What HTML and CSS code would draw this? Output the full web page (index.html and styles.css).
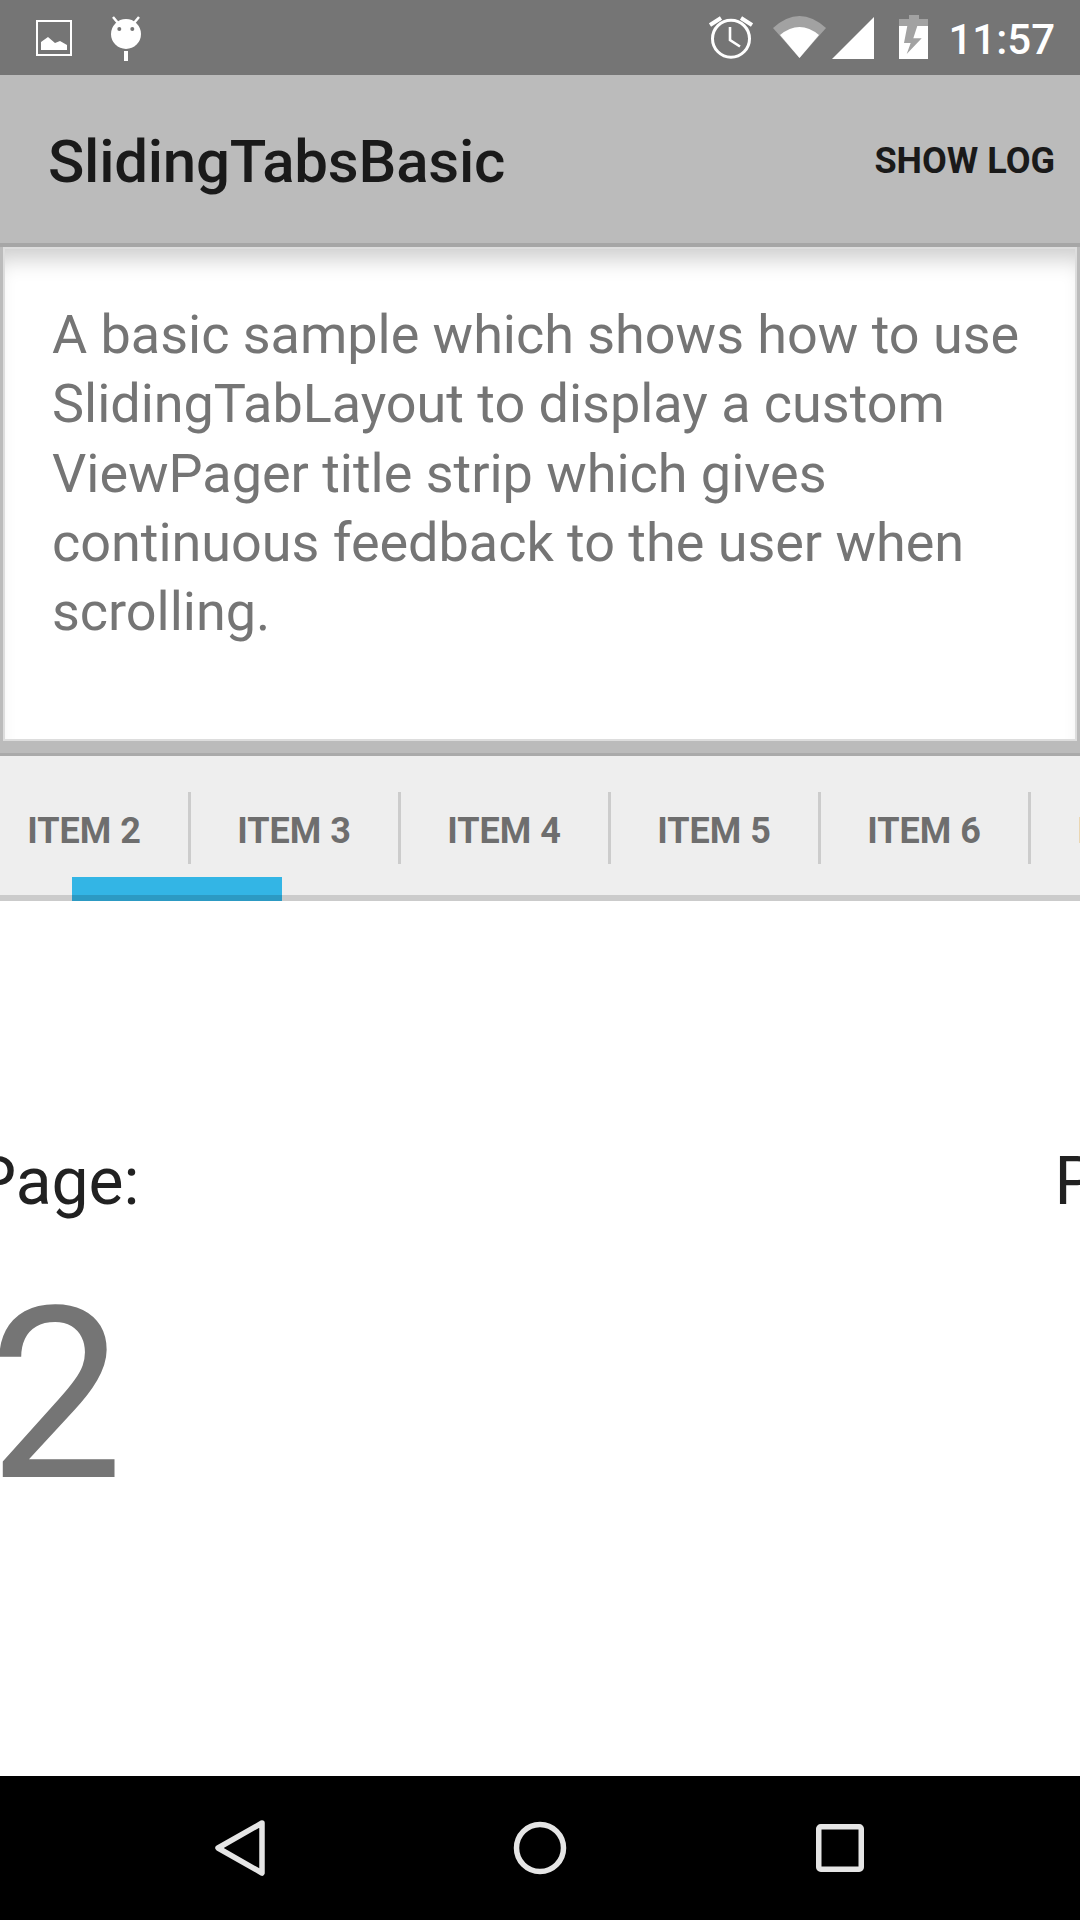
FILE: index.html
```html
<!DOCTYPE html>
<html lang="en">
<head>
<meta charset="utf-8">
<title>SlidingTabsBasic</title>
<link rel="stylesheet" href="styles.css">
</head>
<body>
<div class="screen">
  <header class="status">
    <svg class="ic-picture" viewBox="0 0 36 36" width="36" height="36"><rect x="1" y="1" width="34" height="34" fill="none" stroke="#fff" stroke-width="2"/><path d="M5 30V22L12 17L19 23L24 21L31 25V30Z" fill="#fff"/></svg>
    <svg class="ic-android" viewBox="0 0 32 46" width="32" height="46"><path d="M3 1L8 7M29 1L24 7" stroke="#fff" stroke-width="2.500"/><circle cx="16" cy="18" r="15" fill="#fff"/><circle cx="9.300" cy="13" r="2" fill="#757575"/><circle cx="22.300" cy="13" r="2" fill="#757575"/><rect x="14" y="35" width="4" height="10" fill="#fff"/></svg>
    <div class="status-right">
      <svg class="ic-alarm" viewBox="0 0 44 44" width="44" height="44"><circle cx="22" cy="22.700" r="18.500" fill="none" stroke="#fff" stroke-width="3"/><path d="M21 11V24L31 30.500" fill="none" stroke="#fff" stroke-width="2.600"/><path d="M1 9L12 2M43 9L32 2" stroke="#fff" stroke-width="4"/></svg>
      <svg class="ic-wifi" viewBox="0 0 53 42" width="53" height="42"><path d="M0 12Q26.500 -12 53 12L26.500 42Z" fill="#a2a2a2"/><path d="M7 19Q26.500 3 46 19L26.500 42Z" fill="#fff"/></svg>
      <svg class="ic-signal" viewBox="0 0 42 42" width="42" height="42"><path d="M0 42L42 0V42Z" fill="#fff"/></svg>
      <svg class="ic-battery" viewBox="0 0 29 44" width="29" height="44"><path d="M10 0H20V4H29V11H0V4H10Z" fill="#a2a2a2"/><rect y="11" width="29" height="33" fill="#fff"/><path d="M8.300 11H18.300L14.300 23.300H22.700L7.700 39L11.700 28H5Z" fill="#a2a2a2"/></svg>
      <span class="clock">11:57</span>
    </div>
  </header>

  <div class="appbar">
    <h1 class="title">SlidingTabsBasic</h1>
    <span class="action">SHOW LOG</span>
  </div>

  <section class="intro">
    <p class="intro-card">A basic sample which shows how to use SlidingTabLayout to display a custom ViewPager title strip which gives continuous feedback to the user when scrolling.</p>
  </section>

  <nav class="tabstrip">
    <div class="tabs">
      <div class="tab">ITEM 2</div>
      <div class="tab">ITEM 3</div>
      <div class="tab">ITEM 4</div>
      <div class="tab">ITEM 5</div>
      <div class="tab">ITEM 6</div>
      <div class="tab">ITEM 7</div>
    </div>
    <div class="indicator"></div>
  </nav>

  <main class="pager">
    <div class="page">
      <div class="page-label">Page:</div>
      <div class="page-number">2</div>
    </div>
    <div class="page">
      <div class="page-label">Page:</div>
    </div>
  </main>

  <footer class="navbar">
    <svg class="ic-nav" viewBox="0 0 56 60" width="56" height="60"><path d="M51 5L7 30L51 55Z" fill="none" stroke="#e5e5e5" stroke-width="5.500" stroke-linejoin="round"/></svg>
    <svg class="ic-nav" viewBox="0 0 56 60" width="56" height="60"><circle cx="28" cy="30" r="23.500" fill="none" stroke="#e5e5e5" stroke-width="5.500"/></svg>
    <svg class="ic-nav" viewBox="0 0 56 60" width="56" height="60"><rect x="6.750" y="8.750" width="42.500" height="42.500" rx="2" fill="none" stroke="#e5e5e5" stroke-width="5.500"/></svg>
  </footer>
</div>
</body>
</html>
```

FILE: styles.css
```css
* { box-sizing: border-box; }
html, body { margin: 0; padding: 0; background: #fff; }
body { font-family: Roboto, "Liberation Sans", sans-serif; }

.screen {
  width: 1080px;
  height: 1920px;
  overflow: hidden;
  display: flex;
  flex-direction: column;
}

/* status bar */
.status {
  height: 75px;
  flex: none;
  background: #757575;
  display: flex;
  align-items: flex-start;
  padding: 20px 25px 0 36px;
}
.ic-android { margin: -4px 0 0 38px; }
.status-right { margin-left: auto; display: flex; align-items: flex-start; }
.ic-alarm { margin: -4px 0 0 0; }
.ic-wifi { margin: -4px 0 0 20px; }
.ic-signal { margin: -3px 0 0 6px; }
.ic-battery { margin: -5px 0 0 25px; }
.clock {
  margin: -1px 0 0 20px;
  font-size: 42px;
  font-weight: 500;
  line-height: 42px;
  color: #fff;
}

/* action bar */
.appbar {
  height: 168px;
  flex: none;
  background: #bbb;
  display: flex;
  align-items: center;
  justify-content: space-between;
  padding: 4px 25px 0 48px;
}
.title { margin: 0; font-size: 60px; font-weight: 500; letter-spacing: -0.23px; color: #1a1a1a; }
.action { font-size: 36px; font-weight: 700; color: #1a1a1a; }

/* description */
.intro {
  height: 513px;
  flex: none;
  background: #bbb;
  border-top: 4px solid #a6a6a6;
  border-bottom: 3px solid #aaa;
  padding: 0 3px 12px;
  display: flex;
}
.intro-card {
  margin: 0;
  flex: 1;
  border: 2px solid #ddd;
  background: #fff;
  box-shadow: inset 0 22px 22px -12px rgba(0, 0, 0, 0.2);
  padding: 51px 46px 0 47px;
  font-size: 54px;
  letter-spacing: -0.03px;
  line-height: 69.25px;
  color: #757575;
}

/* tabs */
.tabstrip {
  height: 145px;
  flex: none;
  position: relative;
  background: linear-gradient(#eee 139px, #cbcbcb 139px);
  overflow: hidden;
}
.tabs { display: flex; margin: 36px 0 0 -19px; }
.tab {
  flex: none;
  width: 210px;
  height: 72px;
  display: flex;
  align-items: center;
  justify-content: center;
  padding: 5px 1px 0 0;
  border-right: 3px solid #ccc;
  font-size: 36px;
  font-weight: 700;
  color: #6e6e6e;
}
.indicator {
  position: absolute;
  left: 72px;
  top: 121px;
  width: 210px;
  height: 24px;
  background: linear-gradient(#33b5e5 18px, #2c9ac3 18px);
}

/* pager */
.pager {
  flex: 1;
  overflow: hidden;
  display: flex;
  margin-left: -483px;
  background: #fff;
}
.page {
  flex: none;
  width: 1080px;
  display: flex;
  flex-direction: column;
  align-items: center;
  padding-top: 246px;
}
.page-label { font-size: 66px; line-height: 70px; color: #212121; }
.page-number { font-size: 240px; line-height: 282px; color: #757575; margin: 37px 0 0 -2px; }

/* nav bar */
.navbar {
  height: 144px;
  flex: none;
  background: #000;
  display: flex;
  align-items: center;
  justify-content: space-between;
  padding: 0 212px 0 211px;
}
```
